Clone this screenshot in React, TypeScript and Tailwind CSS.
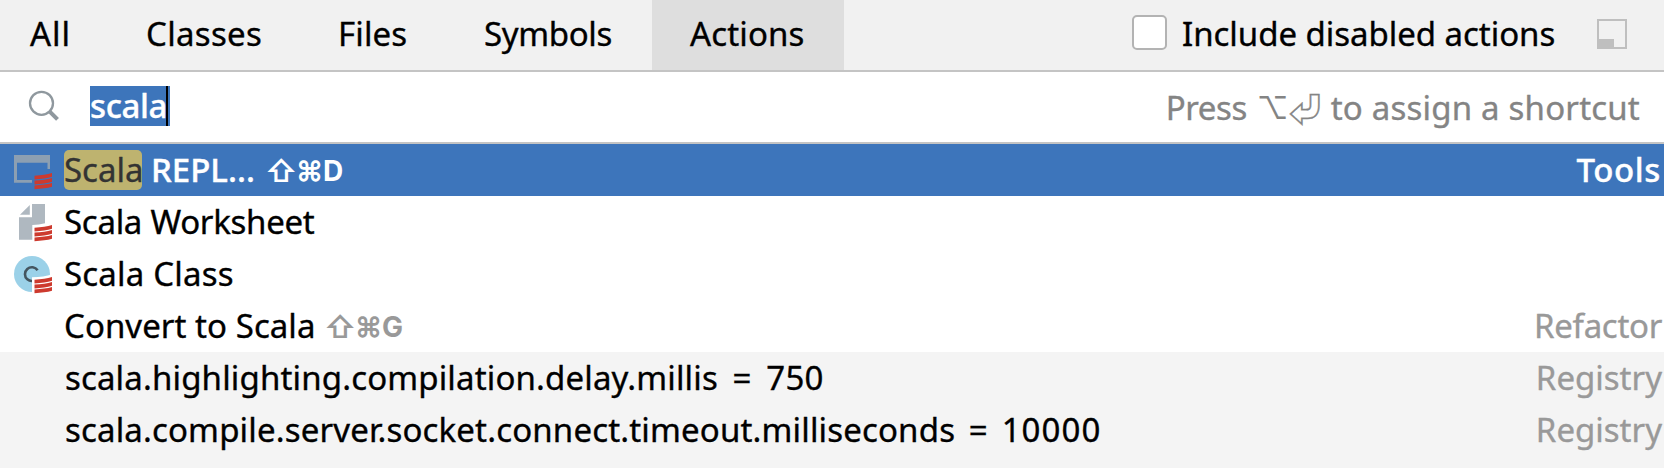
import type { ReactNode } from "react";

function ScalaStripes() {
  return (
    <g fill="#cd3a2e">
      <path d="M34.5 31.7 Q45 31.2 52 29 V32.8 Q45 34.9 34.5 35.4 Z" />
      <path d="M34.5 36.5 Q45 36 52 34 V37.8 Q45 40 34.5 40.5 Z" />
      <path d="M34.5 41.4 Q45 41 52 39 V42.8 Q45 44.8 34.5 45.2 Z" />
    </g>
  );
}

function ReplIcon() {
  return (
    <svg className="block h-[52px] w-16 shrink-0" viewBox="0 0 64 52">
      <path fill="#8c9fb2" d="M14 11 H50 V25 H47.5 V18.7 H17 V36 H32 V38.7 H14 Z" />
      <ScalaStripes />
    </svg>
  );
}

function WorksheetIcon() {
  return (
    <svg className="block h-[52px] w-16 shrink-0" viewBox="0 0 64 52">
      <path fill="#afb8c0" d="M20 18.8 L29.8 9 V18.8 Z" />
      <path fill="#afb8c0" d="M32 8 H45 V27.3 Q39 28.8 32.3 29 V43.7 H19 V21.3 H32 Z" />
      <ScalaStripes />
    </svg>
  );
}

function ClassIcon() {
  return (
    <svg className="block h-[52px] w-16 shrink-0" viewBox="0 0 64 52">
      <circle cx="32" cy="26" r="18" fill="#9bd1e8" />
      <path d="M37.6 22.3 A6.9 6.9 0 1 0 37.6 30" fill="none" stroke="#44555f" strokeWidth="2.6" />
      <path fill="#fff" d="M32 29.3 Q44 29 52 26.5 V47 H32 Z" />
      <ScalaStripes />
    </svg>
  );
}

function Row({
  icon,
  children,
  group,
  className,
}: {
  icon?: ReactNode;
  children: ReactNode;
  group?: ReactNode;
  className?: string;
}) {
  return (
    <li className={`flex h-[52px] items-start leading-[52px] ${className ?? ""}`}>
      {icon ?? <span className="w-16 shrink-0" />}
      {children}
      <span className="ml-auto">{group}</span>
    </li>
  );
}

function Shortcut({ letter, className }: { letter: string; className: string }) {
  return (
    <span
      className={`flex font-['Inter',sans-serif] text-[28px] leading-[54px] font-bold [-webkit-text-stroke:0px] ${className}`}
    >
      <span className="w-[31px] text-[30px] font-semibold">⇧</span>
      <span className="w-[27px]">⌘</span>
      <span>{letter}</span>
    </span>
  );
}

export default function App() {
  return (
    <div className="flex h-[468px] w-[1664px] flex-col overflow-hidden bg-[#f4f4f4] font-['Noto_Sans',sans-serif] text-[33px] whitespace-nowrap text-black [-webkit-text-stroke:0.35px]">
      <header className="flex h-[72px] shrink-0 border-b-2 border-[#c4c4c4] bg-[#f1f1f1] leading-[68px]">
        <div className="h-[70px] w-[107px] pl-[30px] tracking-[1px]">All</div>
        <div className="h-[70px] w-[193px] pl-[39px] tracking-[0.3px]">Classes</div>
        <div className="h-[70px] w-[145px] pl-[38px] tracking-[0.15px]">Files</div>
        <div className="h-[70px] w-[207px] pl-[39px] tracking-[-0.35px]">Symbols</div>
        <div className="h-[70px] w-[192px] bg-[#dedede] pl-[38px] tracking-[0.15px]">Actions</div>
        <label className="ml-auto flex items-start">
          <span className="mt-[15px] h-[35px] w-[35px] rounded-[5px] border-2 border-[#b3b3b3] bg-white" />
          <span className="w-[430px] pl-[15px] tracking-[-0.04px]">Include disabled actions</span>
        </label>
        <svg className="mt-[19px] mr-[37px] h-[30px] w-[30px] shrink-0" viewBox="0 0 30 30">
          <path d="M1 1 H29 V29 H1 Z" fill="none" stroke="#bfbfbf" strokeWidth="2" />
          <path d="M0 20 H17 V30 H0 Z" fill="#bfbfbf" />
        </svg>
      </header>

      <div className="flex h-[72px] shrink-0 items-start border-b-2 border-[#c4c4c4] bg-white">
        <svg className="h-[70px] w-[90px] shrink-0" viewBox="0 0 90 70">
          <circle cx="41.5" cy="31.3" r="11.5" fill="none" stroke="#8f989e" strokeWidth="2.3" />
          <path d="M49.5 39.3 L57.5 47.3" stroke="#8f989e" strokeWidth="4" />
        </svg>
        <div className="mt-[14px] flex h-10 w-20 bg-[#3d75bb] leading-[40px] font-medium text-white">
          <span className="w-[76px] tracking-[-0.4px]">scala</span>
          <span className="h-10 w-0.5 bg-black" />
        </div>
        <div className="ml-auto flex pr-6 leading-[72px] text-[#848484]">
          <span className="w-[91px] tracking-[-0.4px]">Press</span>
          <span className="w-[32px] font-['Inter',sans-serif] text-[31px] [-webkit-text-stroke:0px]">⌥</span>
          <span className="w-[42px] font-['Noto_Sans_CJK_SC',sans-serif]">⏎</span>
          <span className="tracking-[0.2px]">to assign a shortcut</span>
        </div>
      </div>

      <ul>
        <Row
          icon={<ReplIcon />}
          className="bg-[#3d75bb] text-white"
          group={<span className="pr-[3px] font-medium tracking-[0.6px]">Tools</span>}
        >
          <span className="mt-1.5 h-10 w-[78px] rounded-[5px] bg-[#beb36f] leading-[40px] text-[#333]">
            Scala
          </span>
          <span className="w-[123px] pl-[9px] font-medium">REPL...</span>
          <Shortcut letter="D" className="text-white" />
        </Row>
        <Row icon={<WorksheetIcon />} className="bg-white">
          <span className="tracking-[-0.28px]">Scala Worksheet</span>
        </Row>
        <Row icon={<ClassIcon />} className="bg-white">
          <span className="tracking-[0.2px]">Scala Class</span>
        </Row>
        <Row
          className="bg-white"
          group={<span className="pr-0.5 tracking-[-0.3px] text-[#999]">Refactor</span>}
        >
          <span className="w-[260px] tracking-[0.05px]">Convert to Scala</span>
          <Shortcut letter="G" className="text-[#999]" />
        </Row>
        <Row group={<span className="pr-0.5 text-[#999]">Registry</span>}>
          <span className="pl-px tracking-[0.15px] [word-spacing:6px]">
            scala.highlighting.compilation.delay.millis = 750
          </span>
        </Row>
        <Row group={<span className="pr-0.5 text-[#999]">Registry</span>}>
          <span className="pl-px tracking-[0.16px] [word-spacing:5px]">
            scala.compile.server.socket.connect.timeout.milliseconds ={" "}
            <span className="tracking-[1.1px]">10000</span>
          </span>
        </Row>
      </ul>
    </div>
  );
}
